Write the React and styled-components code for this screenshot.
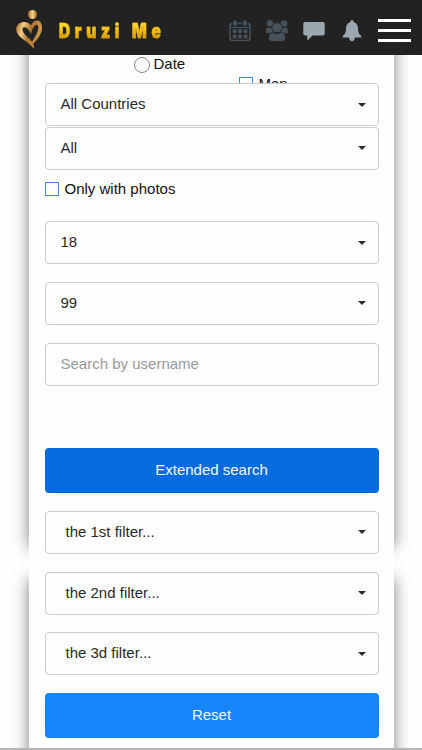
import React from 'react';
import styled, { createGlobalStyle } from 'styled-components';

const GlobalStyle = createGlobalStyle`
  * {
    box-sizing: border-box;
  }

  body {
    margin: 0;
    background: #fefefe;
    color: #111;
    font-family: 'Liberation Sans', Arial, sans-serif;
    font-size: 15px;
  }
`;

const Page = styled.div`
  display: flex;
  flex-direction: column;
  height: 750px;
  overflow: hidden;
  border-bottom: 2px solid #b4b4b4;
`;

const Header = styled.header`
  position: relative;
  z-index: 2;
  display: flex;
  flex: none;
  align-items: center;
  height: 55px;
  padding: 0 11.5px 0 16px;
  background: #222;
`;

const Brand = styled.a`
  display: flex;
  align-items: center;
  flex: 1;
`;

const BrandLogo = styled.svg`
  width: 26px;
  height: 40px;
  margin-top: 3px;
`;

const BrandName = styled.span`
  margin: 6px 0 0 17px;
  font-family: Inter, Roboto, sans-serif;
  font-size: 19.5px;
  line-height: 24px;
  font-weight: 900;
  letter-spacing: 6px;
  white-space: nowrap;
  color: transparent;
  background: linear-gradient(#ffd83a 20%, #efb90c 55%, #c98d05 85%);
  background-clip: text;
  -webkit-text-stroke: 0.5px #e5b010;
  transform: scaleX(0.79);
  transform-origin: left;
`;

const Nav = styled.nav`
  display: flex;
  align-items: center;
  margin-top: 6px;
`;

const NavIcon = styled.svg`
  display: block;
  flex: none;
  width: ${({ $width }) => $width}px;
  height: 24px;
  margin-right: ${({ $gap }) => $gap}px;
  color: ${({ $active }) => ($active ? '#9ba7af' : '#465159')};
`;

const MenuButton = styled.button`
  display: flex;
  flex-direction: column;
  justify-content: space-between;
  width: 33px;
  height: 23px;
  padding: 0;
  border: 0;
  background: none;
`;

const MenuBar = styled.span`
  height: 3px;
  background: #fff;
`;

const Content = styled.main`
  display: grid;
  flex: 1;
  min-height: 0;
  grid-template-columns: 29px 365px 28px;
  grid-template-rows: 492px 32px 169px;
`;

const Panel = styled.section`
  grid-column: 2;
  grid-row: ${({ $row }) => $row};
  margin: ${({ $margin }) => $margin};
  box-shadow: 0 0 15px rgba(0, 0, 0, 0.5);
`;

const Form = styled.form`
  z-index: 1;
  display: flex;
  flex-direction: column;
  grid-column: 2;
  grid-row: 1 / 4;
  padding: 0 15.5px;
  background: #fefefe;
`;

const Options = styled.div`
  display: grid;
  flex: none;
  grid-template-columns: 194px 1fr;
  height: 28px;
`;

const Option = styled.label`
  display: flex;
  align-items: center;
  height: 18px;
  line-height: 18px;
  margin: ${({ $margin }) => $margin};
`;

const Radio = styled.span`
  width: 16px;
  height: 16px;
  margin: 2px 4px 0 0;
  border: 1.5px solid #858585;
  border-radius: 50%;
`;

const Checkbox = styled.span`
  width: 14px;
  height: 14px;
  margin-right: 6px;
  border: 1px solid #4a86dc;
`;

const Select = styled.div`
  position: relative;
  display: flex;
  flex: none;
  align-items: center;
  justify-content: space-between;
  height: 43px;
  margin-bottom: ${({ $gap = 17.7 }) => $gap}px;
  padding: 0 12px 2px ${({ $indent = 15 }) => $indent}px;
  border: 1px solid #ccc;
  border-radius: 4px;
  background: #fefefe;
  color: #292929;
`;

const Caret = styled.span`
  margin-top: 2px;
  border-top: 4px solid #2b2b2b;
  border-right: 4px solid transparent;
  border-left: 4px solid transparent;
`;

const Input = styled.input`
  flex: none;
  width: 100%;
  height: 43px;
  padding: 0 15px 2px;
  border: 1px solid #ccc;
  border-radius: 4px;
  background: transparent;
  font: inherit;

  &::placeholder {
    color: #999;
  }
`;

const Button = styled.button`
  flex: none;
  height: 45px;
  margin: ${({ $margin = '0' }) => $margin};
  padding: 0 0 2px;
  border: 0;
  border-radius: 4px;
  background: ${({ $color }) => $color};
  color: #f4f8ff;
  font: inherit;
`;

const Logo = () => (
  <BrandLogo viewBox="0 0 26 40">
    <defs>
      <linearGradient id="gold" x1="0" y1="0" x2="1" y2="0.3">
        <stop offset="0" stopColor="#9b5d21" />
        <stop offset="0.3" stopColor="#f2cd83" />
        <stop offset="0.6" stopColor="#ad722c" />
        <stop offset="1" stopColor="#d39a48" />
      </linearGradient>
      <linearGradient id="head" x1="0" y1="0" x2="1" y2="0">
        <stop offset="0" stopColor="#a86923" />
        <stop offset="0.5" stopColor="#f6d489" />
        <stop offset="1" stopColor="#a86923" />
      </linearGradient>
    </defs>
    <circle cx="16.500" cy="5.500" r="4.500" fill="url(#head)" />
    <path
      fillRule="evenodd"
      d="M15 16.500C12 11.500 3 11.500 .3 18.500C-1.500 28 11 31 18.200 39.800C18.200 38 17.700 36.500 17 35C22 30 26.500 24 26 17.500C25 9.500 17.500 10 15 16.500ZM16 33C13.500 28.500 6 25.500 6.500 19.500C8 16.500 12.500 18.500 15 25C16.500 18 20.500 13.500 22 17C23 22.500 19 28 16 33Z"
      fill="url(#gold)"
    />
  </BrandLogo>
);

const CalendarIcon = () => (
  <NavIcon viewBox="0 0 22 24" $width={22} $gap={14}>
    <rect x="1" y="4.500" width="20" height="17" rx="2.500" fill="none" stroke="currentColor" strokeWidth="1.500" />
    <path d="M1 8.500H21" stroke="currentColor" strokeWidth="1.300" />
    <g fill="currentColor" stroke="#222" strokeWidth="0.8">
      <rect x="4" y="1" width="4.500" height="6.500" rx="2.200" />
      <rect x="13.500" y="1" width="4.500" height="6.500" rx="2.200" />
    </g>
    <g fill="currentColor">
      {[10.2, 15.4].map((y) =>
        [3.6, 9.1, 14.6].map((x) => (
          <rect key={`${x}-${y}`} x={x} y={y} width="4" height="4" rx="1.200" />
        ))
      )}
    </g>
  </NavIcon>
);

const UsersIcon = () => (
  <NavIcon viewBox="0 0 24 24" $width={24} $gap={14}>
    <g fill="currentColor" stroke="#222" strokeWidth="0.7">
      <circle cx="5" cy="4.500" r="3.700" />
      <circle cx="19" cy="4.500" r="3.700" />
      <path d="M3 8.500H7L9 13L6 14.500H2Q.7 14.500.7 13V11Q.7 8.500 3 8.500Z" />
      <path d="M21 8.500H17L15 13L18 14.500H22Q23.300 14.500 23.300 13V11Q23.300 8.500 21 8.500Z" />
      <circle cx="12" cy="8.700" r="5.100" />
      <path d="M7.500 13Q12 16.500 16.500 13Q20.500 14 20.500 19.500Q20.500 22.500 17 22.500H7Q3.500 22.500 3.500 19.500Q3.500 14 7.500 13Z" />
    </g>
  </NavIcon>
);

const CommentIcon = () => (
  <NavIcon viewBox="0 0 22 24" $width={22} $gap={17} $active>
    <path
      d="M2 3H20Q21.700 3 21.700 4.700V14.800Q21.700 16.500 20 16.500H9.500L4.300 21.700V16.500H2Q.3 16.500.3 14.800V4.700Q.3 3 2 3Z"
      fill="currentColor"
    />
  </NavIcon>
);

const BellIcon = () => (
  <NavIcon viewBox="0 0 20 24" $width={20} $gap={16} $active>
    <path
      d="M10 1Q11.500 1 11.700 3Q16 4.500 16 10Q16 14.800 19.300 17V18.500H.7V17Q4 14.800 4 10Q4 4.500 8.300 3Q8.500 1 10 1ZM7 18.300H13Q12.300 22.200 10 22.200T7 18.300Z"
      fill="currentColor"
    />
  </NavIcon>
);

const Dropdown = ({ children, gap, indent }) => (
  <Select $gap={gap} $indent={indent}>
    {children}
    <Caret />
  </Select>
);

const App = () => {
  return (
    <Page>
      <GlobalStyle />
      <Header>
        <Brand>
          <Logo />
          <BrandName>Druzi Me</BrandName>
        </Brand>
        <Nav>
          <CalendarIcon />
          <UsersIcon />
          <CommentIcon />
          <BellIcon />
          <MenuButton type="button" aria-label="Menu">
            <MenuBar />
            <MenuBar />
            <MenuBar />
          </MenuButton>
        </Nav>
      </Header>
      <Content>
        <Panel $row={1} $margin="-20px 0 0" />
        <Panel $row={3} $margin="0 0 -20px" />
        <Form>
          <Options>
            <Option $margin="0 0 0 89px">
              <Radio />
              Date
            </Option>
            <Option $margin="20px 0 0">
              <Checkbox />
              Man
            </Option>
          </Options>
          <Dropdown gap={0.6}>All Countries</Dropdown>
          <Dropdown gap={10.4}>All</Dropdown>
          <Option $margin="0 0 23.3px">
            <Checkbox />
            Only with photos
          </Option>
          <Dropdown>18</Dropdown>
          <Dropdown gap={18}>99</Dropdown>
          <Input placeholder="Search by username" />
          <Button type="button" $color="#036bdc" $margin="62px 0 18px">
            Extended search
          </Button>
          <Dropdown indent={20}>the 1st filter...</Dropdown>
          <Dropdown indent={20}>the 2nd filter...</Dropdown>
          <Dropdown indent={20}>the 3d filter...</Dropdown>
          <Button type="reset" $color="#1784f9">
            Reset
          </Button>
        </Form>
      </Content>
    </Page>
  );
};

export default App;
